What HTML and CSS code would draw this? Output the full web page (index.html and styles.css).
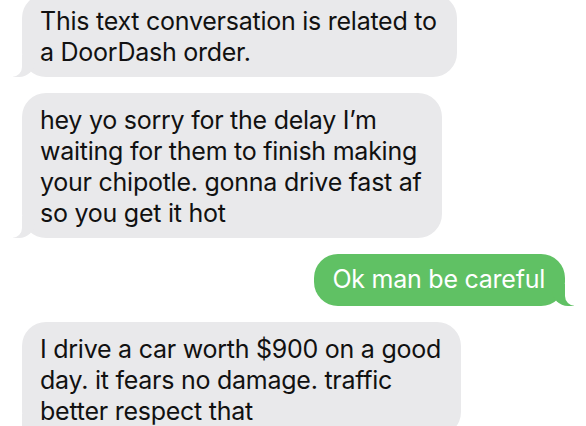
FILE: index.html
```html
<!DOCTYPE html>
<html>
<head>
<meta charset="utf-8">
<link rel="stylesheet" href="styles.css">
</head>
<body>
<div class="thread">
  <div class="bubble in first">This text conversation is related to<br>a DoorDash order.</div>
  <div class="bubble in">hey yo sorry for the delay I’m<br>waiting for them to finish making<br>your chipotle. gonna drive fast af<br>so you get it hot</div>
  <div class="bubble out">Ok man be careful</div>
  <div class="bubble in">I drive a car worth $900 on a good<br>day. it fears no damage. traffic<br>better respect that</div>
</div>
</body>
</html>
```
FILE: styles.css
```css
html, body {
  margin: 0;
  padding: 0;
  background: #ffffff;
  overflow: hidden;
}
.thread {
  width: 586px;
  height: 426px;
  display: flex;
  flex-direction: column;
  gap: 16px;
  padding: 0 21px 0 22px;
  box-sizing: border-box;
  font-family: Inter, "Liberation Sans", sans-serif;
  font-size: 25px;
  line-height: 31px;
  letter-spacing: -0.25px;
  color: #111111;
}
.bubble {
  position: relative;
  width: fit-content;
  border-radius: 24px;
  padding: 12px 20px 9px 18px;
  white-space: nowrap;
}
.first {
  margin-top: -6px;
}
.in {
  background: #e9e9eb;
  align-self: flex-start;
}
.out {
  background: #60c164;
  color: #ffffff;
  align-self: flex-end;
  padding: 10px 20px 11px 19px;
}
.in::before {
  content: "";
  position: absolute;
  bottom: 0;
  left: -9px;
  width: 22px;
  height: 22px;
  background: #e9e9eb;
  border-bottom-right-radius: 16px;
}
.in::after {
  content: "";
  position: absolute;
  bottom: 0;
  left: -12px;
  width: 12px;
  height: 22px;
  background: #ffffff;
  border-bottom-right-radius: 10px;
}
.out::before {
  content: "";
  position: absolute;
  bottom: 0;
  right: -9px;
  width: 22px;
  height: 22px;
  background: #60c164;
  border-bottom-left-radius: 16px;
}
.out::after {
  content: "";
  position: absolute;
  bottom: 0;
  right: -12px;
  width: 12px;
  height: 22px;
  background: #ffffff;
  border-bottom-left-radius: 10px;
}
```
